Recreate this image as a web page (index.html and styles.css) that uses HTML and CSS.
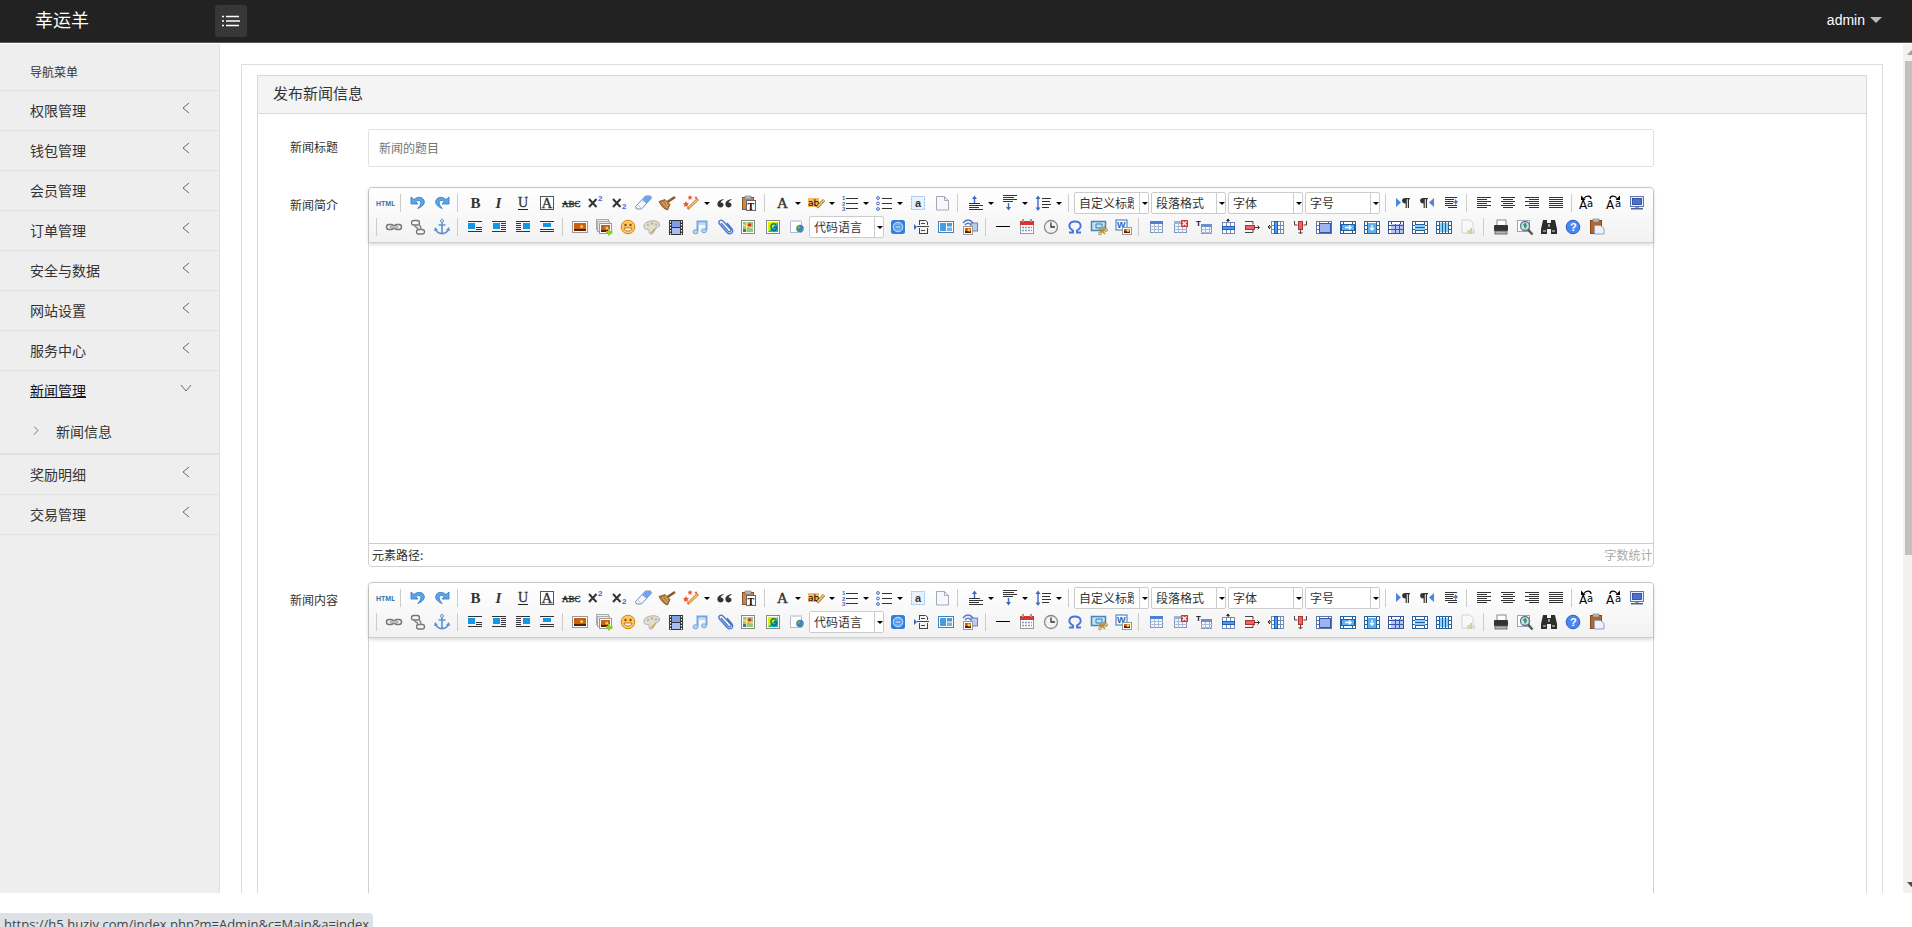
FILE: index.html
```html
<!DOCTYPE html>
<html lang="zh-CN">
<head>
<meta charset="utf-8">
<title>发布新闻信息</title>
<link rel="stylesheet" href="styles.css">
</head>
<body>
<header class="topbar">
  <a class="brand" href="#">幸运羊</a>
  <button class="menu-toggle" type="button" aria-label="菜单">
    <svg width="18" height="12" viewBox="0 0 18 12"><path d="M0 1.5h2M4 1.5h13M0 6h2M4 6h14M0 10.500h2M4 10.500h13" stroke="#fff" stroke-width="1.300"/></svg>
  </button>
  <button class="account" type="button">admin <span class="caret"></span></button>
</header>

<div class="shell">
  <nav class="sidebar">
    <h2 class="nav-title">导航菜单</h2>
    <ul class="nav-list">
      <li><a class="nav-link" href="#">权限管理<svg class="chevron" viewBox="0 0 12 12"><path d="M9 1 3 6l6 5"/></svg></a></li>
      <li><a class="nav-link" href="#">钱包管理<svg class="chevron" viewBox="0 0 12 12"><path d="M9 1 3 6l6 5"/></svg></a></li>
      <li><a class="nav-link" href="#">会员管理<svg class="chevron" viewBox="0 0 12 12"><path d="M9 1 3 6l6 5"/></svg></a></li>
      <li><a class="nav-link" href="#">订单管理<svg class="chevron" viewBox="0 0 12 12"><path d="M9 1 3 6l6 5"/></svg></a></li>
      <li><a class="nav-link" href="#">安全与数据<svg class="chevron" viewBox="0 0 12 12"><path d="M9 1 3 6l6 5"/></svg></a></li>
      <li><a class="nav-link" href="#">网站设置<svg class="chevron" viewBox="0 0 12 12"><path d="M9 1 3 6l6 5"/></svg></a></li>
      <li><a class="nav-link" href="#">服务中心<svg class="chevron" viewBox="0 0 12 12"><path d="M9 1 3 6l6 5"/></svg></a></li>
      <li class="open">
        <a class="nav-link current" href="#">新闻管理<svg class="chevron" viewBox="0 0 12 12"><path d="M1 3l5 6 5-6"/></svg></a>
        <ul class="sub-list">
          <li><a class="sub-link" href="#"><svg class="sub-chevron" viewBox="0 0 6 9"><path d="M1 .5l4 4-4 4"/></svg>新闻信息</a></li>
        </ul>
      </li>
      <li><a class="nav-link" href="#">奖励明细<svg class="chevron" viewBox="0 0 12 12"><path d="M9 1 3 6l6 5"/></svg></a></li>
      <li><a class="nav-link" href="#">交易管理<svg class="chevron" viewBox="0 0 12 12"><path d="M9 1 3 6l6 5"/></svg></a></li>
    </ul>
  </nav>

  <main class="content">
    <section class="frame">
      <form class="panel">
        <h1 class="panel-title">发布新闻信息</h1>
        <div class="panel-body">
          <div class="row row-input">
            <label class="row-label" for="title">新闻标题</label>
            <input class="text-input" id="title" type="text" placeholder="新闻的题目">
          </div>
          <div class="row row-editor">
            <label class="row-label" for="intro">新闻简介</label>
            <div class="editor">
              <div class="toolbar"></div>
              <textarea class="editor-area" id="intro"></textarea>
              <div class="editor-foot"><span>元素路径:</span><span class="count">字数统计</span></div>
            </div>
          </div>
          <div class="row row-editor">
            <label class="row-label" for="body">新闻内容</label>
            <div class="editor">
              <div class="toolbar"></div>
              <textarea class="editor-area" id="body"></textarea>
              <div class="editor-foot"><span>元素路径:</span><span class="count">字数统计</span></div>
            </div>
          </div>
        </div>
      </form>
    </section>
  </main>

  <div class="scroll-track" aria-hidden="true">
    <svg class="scroll-arrow" viewBox="0 0 17 17"><path d="M4 11l4.500-5 4.500 5z" fill="#a0a0a0"/></svg>
    <div class="scroll-thumb"></div>
    <svg class="scroll-arrow" viewBox="0 0 17 17"><path d="M4 6l4.500 5L13 6z" fill="#505050"/></svg>
  </div>
</div>

<footer class="status"><div class="status-text">https://h5.huziy.com/index.php?m=Admin&amp;c=Main&amp;a=index</div></footer>
<script src="toolbar.js"></script>
</body>
</html>
```

FILE: styles.css
```css
* { box-sizing: border-box; }

body {
  margin: 0;
  height: 100vh;
  display: flex;
  flex-direction: column;
  overflow: hidden;
  background: #fff;
  color: #333;
  font-family: "Noto Sans CJK SC", sans-serif;
  font-size: 12px;
}

a { color: inherit; text-decoration: none; }
button { font: inherit; border: 0; padding: 0; background: none; color: inherit; }
ul { list-style: none; margin: 0; padding: 0; }

.topbar {
  flex: none;
  height: 43px;
  display: flex;
  align-items: flex-start;
  background: #222;
  border-bottom: 1px solid #555;
  color: #fff;
}
.brand { width: 215px; padding-left: 35px; font-size: 18px; line-height: 38px; }
.menu-toggle {
  width: 32px;
  height: 32px;
  margin-top: 5px;
  display: grid;
  place-items: center;
  border-radius: 3px;
  background: #373737;
}
.account {
  margin-left: auto;
  padding-right: 30px;
  display: flex;
  align-items: center;
  gap: 5px;
  font-family: "Liberation Sans", Arial, sans-serif;
  font-size: 14px;
  line-height: 40px;
}
.caret { border: 6px solid transparent; border-top-color: #bbb; border-bottom: 0; }

.shell { flex: 1; min-height: 0; display: flex; margin-top: 1px; }

.sidebar { flex: none; width: 220px; background: #eee; border-right: 1px solid #e2e2e2; }
.nav-title {
  margin: 0;
  height: 47px;
  padding: 10px 30px 0;
  border-bottom: 1px solid #e2e2e2;
  font-size: 12px;
  font-weight: 400;
  line-height: 36px;
}
.nav-list > li { border-bottom: 1px solid #e2e2e2; }
.nav-link {
  height: 39px;
  padding: 0 27px 0 30px;
  display: flex;
  justify-content: space-between;
  font-size: 14px;
  line-height: 39px;
}
.current { color: #112; text-decoration: underline; }
.chevron { width: 12px; height: 12px; margin-top: 11px; fill: none; stroke: #666; }
.sub-list { border-bottom: 1px solid #e2e2e2; }
.sub-link {
  height: 43px;
  padding: 0 0 2px 33px;
  display: flex;
  align-items: center;
  gap: 17px;
  font-size: 14px;
}
.sub-chevron { width: 6px; height: 9px; fill: none; stroke: #777; }

.content { flex: 1; min-width: 0; overflow: hidden; padding: 20px 20px 0 21px; }
.frame { border: 1px solid #ddd; padding: 10px 15px; }
.panel { border: 1px solid #d9d9d9; }
.panel-title {
  margin: 0;
  height: 38px;
  padding-left: 15px;
  border-bottom: 1px solid #d9d9d9;
  background: #f4f4f4;
  font-size: 15px;
  font-weight: 400;
  line-height: 34px;
}
.panel-body { padding-top: 15px; }
.row { display: flex; }
.row-input { margin-bottom: 20px; }
.row-editor { margin-bottom: 15px; }
.row-label { flex: none; width: 110px; padding-left: 32px; line-height: 36px; }
.text-input {
  width: 80%;
  height: 38px;
  padding: 0 10px 2px;
  border: 1px solid #e2e2e2;
  border-radius: 2px;
  font: inherit;
}
.text-input::placeholder { color: #757575; opacity: 1; }

.editor { width: 80%; min-width: 0; border: 1px solid #d0d0d0; border-radius: 4px; }
.toolbar {
  position: relative;
  padding: 3px 4px;
  border-bottom: 1px solid #d0d0d0;
  border-radius: 4px 4px 0 0;
  background: linear-gradient(#fff, #f2f2f2);
  box-shadow: 0 1px 4px rgba(0, 0, 0, .2);
}
.tool-row { display: flex; flex-wrap: wrap; min-height: 24px; align-items: center; }
.tool { width: 24px; height: 24px; display: flex; align-items: center; padding-left: 2px; }
.tool svg { flex: none; width: 20px; height: 20px; }
.tool-menu { width: 34px; }
.tool-menu::after {
  content: "";
  margin-left: 3px;
  border: 3px solid transparent;
  border-top-color: #000;
  border-bottom: 0;
}
.off { opacity: .35; }
.sep { width: 1px; height: 18px; margin: 0 5px 0 3px; background: #ccc; }
.combo { position: relative; width: 75px; height: 22px; margin: 0 2px 0 0; }
.tool + .combo { margin: 0 2px 0 1px; }
.combo select {
  width: 100%;
  height: 22px;
  padding: 0 14px 1px 4px;
  border: 1px solid #ccc;
  border-radius: 2px;
  appearance: none;
  background: linear-gradient(#ccc, #ccc) right 8px top / 1px 100% no-repeat, #fff;
  color: #333;
  font: inherit;
}
.combo::after {
  content: "";
  position: absolute;
  right: 1px;
  top: 10px;
  border: 3px solid transparent;
  border-top-color: #000;
  border-bottom: 0;
}
.editor-area { display: block; width: 100%; height: 300px; border: 0; resize: none; background: #fff; }
.editor-foot {
  height: 23px;
  padding: 0 1px 0 3px;
  display: flex;
  justify-content: space-between;
  border-top: 1px solid #ccc;
  line-height: 22px;
}
.count { color: #aaa; }

.scroll-track {
  flex: none;
  width: 9px;
  overflow: hidden;
  display: flex;
  flex-direction: column;
  background: #f1f1f1;
}
.scroll-arrow { flex: none; width: 17px; height: 17px; }
.scroll-thumb { width: 13px; height: 58.2%; margin: 0 2px auto; background: #c1c1c1; }

.status { flex: none; height: 34px; padding-top: 20px; overflow: hidden; }
.status-text {
  width: max-content;
  padding: 0 4px;
  border-radius: 0 4px 0 0;
  background: #dee1e6;
  color: #444;
  font-family: "Open Sans", sans-serif;
  font-size: 13px;
  line-height: 22px;
}
```

FILE: toolbar.js
```js
const rect = (x, y, w, h, fill, more = '') =>
  `<rect x="${x}" y="${y}" width="${w}" height="${h}" fill="${fill}" ${more}/>`;
const line = (d, stroke = '#333', w = 1, more = '') =>
  `<path d="${d}" fill="none" stroke="${stroke}" stroke-width="${w}" ${more}/>`;
const fill = (d, color, more = '') => `<path d="${d}" fill="${color}" ${more}/>`;
const text = (x, y, size, value, more = '') =>
  `<text x="${x}" y="${y}" font-size="${size}" ${more}>${value}</text>`;
const serif = 'font-family="Liberation Serif" fill="#333"';
const sans = 'font-family="Liberation Sans" font-weight="bold"';
const bars = list => list.map(([x, y, w]) => rect(x, y, w, 1, '#333')).join('');

const photo = (x, y, w, h) =>
  rect(x + .5, y + .5, w - 1, h - 1, '#fff', 'stroke="#999"') +
  rect(x + 2, y + 2, w - 4, h - 4, '#c9600f') +
  rect(x + 2, y + h - 4, w - 4, 2, '#5a2006') +
  `<circle cx="${x + w * .6}" cy="${y + h * .45}" r="1.5" fill="#ffc64a"/>`;

const grid = (x, y, w, h, head = '#4a80d8', body = '#f4f8fe') =>
  rect(x + .5, y + .5, w - 1, h - 1, body, 'stroke="#7c93bd"') +
  line(`M${x} ${y + 5.5}h${w}M${x} ${y + 8.5}h${w}M${x + 4.5} ${y + 3}v${h - 3}M${x + 8.5} ${y + 3}v${h - 3}`, '#a9b9d6') +
  rect(x, y, w, 3, head);

const cells = (inner, edge = '#2b5f9e') =>
  rect(2.5, 4.5, 15, 12, '#fff', `stroke="${edge}"`) +
  line('M2 8.500h3M2 12.500h3M15 8.500h3M15 12.500h3M5.500 4v13M14.500 4v13', edge) + inner;

const undo = '<path d="M3 4v7h7L7.800 8.800c2-2 5-1.500 5 .8 0 2-1 3.500-3 5.900 4-1.500 6.500-3.800 6.500-6.500 0-4.500-6-6.500-10.300-2.400z" fill="#5aa5e6" stroke="#2f78c4" stroke-width=".8"/>';
const upArrow = (x, y) => line(`M${x} ${y + 2}v5`, '#3f68c0', 1.4) + fill(`M${x - 2.5} ${y + 3}l2.500-3.500 2.500 3.500z`, '#3f68c0');
const downArrow = (x, y) => line(`M${x} ${y}v5`, '#3f68c0', 1.4) + fill(`M${x - 2.5} ${y + 4}l2.500 3.500 2.500-3.500z`, '#3f68c0');
const pilcrow = x => fill(`M${x + 8} 5v1.200h-1V15H${x + 5.8}V6.200H${x + 4.8}V15H${x + 3.6}v-4.500C${x - 1} 10.500 ${x - 1} 5 ${x + 3} 5z`, '#333');
const smallA = 'font-family="DejaVu Sans" fill="#000"';

const icons = {
  html: ['HTML', text(1, 12.5, 7, 'HTML', `${sans} fill="#36729f"`)],
  undo: ['撤销', undo],
  redo: ['重做', `<g transform="matrix(-1 0 0 1 20 0)">${undo}</g>`],
  bold: ['加粗', text(5.500, 15, 15, 'B', `${serif} font-weight="bold"`)],
  italic: ['斜体', text(6.500, 15, 15, 'I', `${serif} font-weight="bold" font-style="italic"`)],
  underline: ['下划线', text(5, 14, 14, 'U', `${serif} stroke="#333" stroke-width=".3"`) + rect(5, 16, 10, 1, '#222')],
  border: ['字符边框', rect(3.5, 3.5, 13, 13, '#fff', 'stroke="#555"') + text(4.500, 15, 15, 'A', `${serif} stroke="#333" stroke-width=".3"`)],
  strike: ['删除线', text(1, 14, 9, 'ABC', `${serif} stroke="#333" stroke-width=".4"`) + rect(1, 10, 17, 1, '#333')],
  sup: ['上标', line('M4 6l7.500 8M11.500 6L4 14', '#333', 2) + text(13, 8, 8, '2', `${sans} fill="#3c69d6"`)],
  sub: ['下标', line('M4 6l7.500 8M11.500 6L4 14', '#333', 2) + text(13, 16, 8, '2', `${sans} fill="#3c69d6"`)],
  eraser: ['清除格式', fill('M2.500 13.500L12.500 3h5l1 2-10 11H3.500z', '#f5f7fb', 'stroke="#7c8aa8"') + fill('M9 7L12.500 3h5l1 2-5 5.500z', '#6ea3ee') + line('M4.500 12l4 3.500', '#b8c2d4')],
  broom: ['格式刷', fill('M2 8.500l6-2 5 5-2.500 5.500C7 16 4 13 2 8.500z', '#b37a3a', 'stroke="#7c4c1b" stroke-width=".8"') + line('M5 9l5 6M8 8l3 5', '#e3b877') + line('M10.500 9L18 4', '#8a5a2b', 2.6)],
  magic: ['自动排版', line('M6.500 16L17 6', '#d98a3e', 3) + line('M8 14.500L16 7', '#ffe0a0', 1) + fill('M5 8l1 2 2 .3-1.500 1.500.3 2L5 13l-2 .8.4-2L2 10.300 4 10zM9 2l.7 1.600 1.800.2-1.300 1.200.3 1.800L9 6l-1.500.8.300-1.800L6.500 3.800l1.800-.2zM15 3l.5 1 1 .2-.8.800.2 1-.9-.5-.9.5.2-1-.8-.8 1-.2z', '#e8552b')],
  quote: ['引用', fill('M8.500 6C4 7 2 9 2.500 12c.5 3.500 6 3 6 0 0-1.800-1.500-2.700-3-2.300C5.800 8.200 7 7.300 8.500 7zM16.500 6c-4.500 1-6.500 3-6 6 .5 3.500 6 3 6 0 0-1.800-1.500-2.700-3-2.300.3-1.500 1.500-2.400 3-2.700z', '#333')],
  pasteplain: ['纯文本粘贴', rect(3.5, 4.5, 11, 12, '#c98748', 'stroke="#8a5226"') + rect(6, 3, 6, 3, '#bbb', 'stroke="#777" stroke-width=".6"') + rect(7.5, 7.5, 9, 10, '#fff', 'stroke="#666"') + text(8.500, 16.500, 10, 'T', 'font-family="Liberation Serif" font-weight="bold"')],
  forecolor: ['字体颜色', text(5, 14.500, 15, 'A', `${serif} stroke="#333" stroke-width=".4"`)],
  backcolor: ['背景色', rect(2, 5, 11, 9, '#f7b95c') + text(2, 12.500, 9, 'ab', 'font-family="DejaVu Sans" fill="#000"') + line('M11 14.500L18 7', '#8f6320', 3) + line('M11.500 14L18 7', '#ffd978', 1.3)],
  ol: ['有序列表', ['1', '2', '3'].map((n, i) => text(2, 7 + i * 5.5, 6, n, `${sans} fill="#3f68c0"`)).join('') + bars([[6, 5, 12], [6, 10, 12], [6, 15, 12]])],
  ul: ['无序列表', [5, 10.5, 16].map(y => `<circle cx="4" cy="${y}" r="1.400" fill="none" stroke="#3f68c0"/>`).join('') + bars([[8, 5, 10], [8, 10, 10], [8, 15, 10]])],
  selectall: ['全选', rect(3.500, 3.500, 13, 13, '#eaf3fd', 'stroke="#8fbdee" stroke-dasharray="2 1"') + text(7, 14, 11, 'a', `${sans} fill="#333"`)],
  cleardoc: ['清空文档', fill('M4.500 3.500h8l4 4v9.500h-12z', '#f6f7fa', 'stroke="#a3a9b8"') + line('M12.500 3.500v4h4', '#a3a9b8')],
  rowtop: ['段前距', upArrow(9.500, 3) + bars([[4, 10, 11], [4, 12, 14], [4, 14, 10], [4, 16, 14]])],
  rowbottom: ['段后距', bars([[4, 2, 14], [4, 4, 11], [4, 6, 14], [4, 8, 10]]) + downArrow(9.500, 10)],
  lineheight: ['行间距', line('M5 5v11', '#3f68c0', 1.4) + fill('M2.500 6L5 2.500 7.500 6zM2.500 14.500L5 18l2.500-3.500z', '#3f68c0') + bars([[9, 5, 9], [9, 8, 8], [9, 11, 9], [9, 14, 7]])],
  ltr: ['从左向右输入', fill('M3 5l5 4.500L3 14z', '#4a84e8') + pilcrow(9)],
  rtl: ['从右向左输入', pilcrow(3) + fill('M17 5l-5 4.500 5 4.500z', '#4a84e8')],
  indent: ['首行缩进', bars([[4, 4, 12], [4, 6, 9], [4, 8, 8], [4, 10, 8], [4, 12, 12], [7, 14, 9]]) + line('M12 9h3', '#3f78d8', 1.5) + fill('M14 6l3 3-3 3z', '#3f78d8')],
  left: ['居左对齐', bars([[3, 4, 14], [3, 6, 10], [3, 8, 14], [3, 10, 10], [3, 12, 14], [3, 14, 10]])],
  center: ['居中对齐', bars([[3, 4, 14], [5, 6, 10], [3, 8, 14], [5, 10, 10], [3, 12, 14], [5, 14, 10]])],
  right: ['居右对齐', bars([[3, 4, 14], [7, 6, 10], [3, 8, 14], [7, 10, 10], [3, 12, 14], [7, 14, 10]])],
  justify: ['两端对齐', bars([[3, 4, 14], [3, 6, 14], [3, 8, 14], [3, 10, 14], [3, 12, 14], [3, 14, 14]])],
  upper: ['字母大写', text(0, 16, 12, 'A', smallA) + text(8, 14, 10, 'a', smallA) + line('M12 6c0-3.500-5-4-7-.5', '#000', 1.2) + fill('M2 2.500v4.500h4.500z', '#000')],
  lower: ['字母小写', text(3, 16, 12, 'A', smallA) + text(12, 14, 10, 'a', smallA) + line('M7 6c0-3.500 5-4 7-.5', '#000', 1.2) + fill('M17 2.500v4.500h-4.500z', '#000')],
  full: ['全屏', rect(3.5, 3.5, 13, 10, '#e8eefb', 'stroke="#5d78b0"') + rect(5.500, 5.500, 9, 6, '#4a70d4', 'stroke="#26408a" stroke-width=".8"') + rect(8, 14, 4, 1, '#8899bb') + rect(4, 15, 12, 1.5, '#4b6192')],

  link: ['超链接', rect(2.5, 7.5, 7, 5, 'none', 'rx="2.500" stroke="#777" stroke-width="1.500"') + rect(10.5, 7.5, 7, 5, 'none', 'rx="2.500" stroke="#777" stroke-width="1.500"') + rect(6, 9, 8, 2, '#ddd', 'rx="1" stroke="#888" stroke-width=".8"')],
  unlink: ['取消链接', rect(3.5, 3.5, 8, 4.5, '#f7f7f7', 'rx="2.200" stroke="#777" stroke-width="1.300"') + rect(8.5, 12.5, 8, 4.5, '#f7f7f7', 'rx="2.200" stroke="#777" stroke-width="1.300"') + line('M6 7c0 4 3 2 4 5M10 7c2 1 3 3 3 6', '#888', 1.5)],
  anchor: ['锚点', '<circle cx="10" cy="4" r="1.500" fill="none" stroke="#5b93cf"/>' + line('M10 5.500V17M6.500 8h7', '#5b93cf', 1.6) + line('M3.500 12c1 3 3 4.500 6.500 4.500s5.500-1.500 6.500-4.500', '#5b93cf', 1.8) + fill('M2 14l1-4 3 3zM18 14l-1-4-3 3z', '#5b93cf')],
  imgnone: ['默认', bars([[3, 4, 14], [11, 10, 6], [11, 12, 6], [3, 14, 14]]) + rect(3, 6, 7, 6, '#1496e4')],
  imgleft: ['左浮动', bars([[3, 4, 14], [12, 6, 5], [12, 8, 5], [12, 10, 5], [12, 12, 5], [3, 14, 14]]) + rect(4, 6, 7, 6, '#1496e4')],
  imgright: ['右浮动', bars([[3, 4, 14], [3, 6, 5], [3, 8, 5], [3, 10, 5], [3, 12, 5], [3, 14, 14]]) + rect(10, 6, 7, 6, '#1496e4')],
  imgcenter: ['居中', bars([[3, 4, 14], [3, 12, 14], [3, 14, 14]]) + rect(6, 6, 8, 4, '#1496e4')],
  image: ['单图上传', photo(2, 4, 16, 12)],
  images: ['多图上传', rect(2.5, 2.5, 12, 10, '#eee', 'stroke="#aaa"') + rect(3.5, 4.5, 12, 10, '#eee', 'stroke="#aaa"') + photo(5, 6, 13, 11) + fill('M14 12h2v2h2.500v2.200H16v2.300h-2v-2.300h-2V14h2z', '#8ed11f')],
  emotion: ['表情', '<circle cx="10" cy="10" r="6.800" fill="#ffc95a" stroke="#d98318"/><circle cx="7.500" cy="8" r="1.200" fill="#8a4a10"/><circle cx="12.500" cy="8" r="1.200" fill="#8a4a10"/>' + fill('M6 11h8c-.5 4-7.500 4-8 0z', '#fff', 'stroke="#a65b12" stroke-width=".8"')],
  scrawl: ['涂鸦', fill('M9 4c5-1 9 1 8.500 4s-3.500 2-4.500 4-1 5-4 5-1.500-3-2-4-4.500.5-5-3 3-5.500 7-6z', '#e0ded4', 'stroke="#b0aea5"') + '<circle cx="6" cy="8" r="1.300" fill="#a9c98e"/><circle cx="10" cy="6.500" r="1.300" fill="#e0a86e"/><circle cx="14" cy="7.500" r="1.300" fill="#9dbbdd"/>' + line('M9 16l5-5', '#c9a44c', 1.3)],
  video: ['视频', rect(3, 3, 14, 15, '#333') + rect(6, 4, 8, 6, '#7d9de8') + rect(6, 11, 8, 6, '#a7bdf2') + line('M4.500 4v14M15.500 4v14', '#fff', 1.2, 'stroke-dasharray="1.500 1.500"')],
  music: ['音乐', line('M7.500 14V4.500h9V13', '#6da7dd', 2) + line('M7.500 7h9', '#9cc6ec', 1.2) + '<ellipse cx="5.500" cy="14.800" rx="2.500" ry="2" fill="#b4d5f3" stroke="#6da7dd"/><ellipse cx="14" cy="13.800" rx="2.500" ry="2" fill="#b4d5f3" stroke="#6da7dd"/>'],
  attach: ['附件', line('M7 6l7 8c2 2 4 0 2.500-2L9 4C6.500 2 3.500 4.500 5.500 7l7.500 8.500c3 3 7.500 0 5-3.500L13 6', '#4477cc', 1.3)],
  map: ['地图', rect(3.5, 3.5, 13, 13, '#fff', 'stroke="#888"') + rect(5, 5, 10, 10, '#8ecb7a') + line('M5 8l10 3M9 5l-1 10', '#f7e27b', 1.5) + '<circle cx="11.500" cy="8" r="1.800" fill="#d8362a"/>' + rect(5, 12, 3, 3, '#3b74c8')],
  gmap: ['Google地图', rect(4.5, 3.5, 13, 13, '#fff', 'stroke="#888"') + rect(6, 5, 10, 10, '#00b8d8') + fill('M6 5h10L6 15z', '#dff000') + line('M14 7.500c-3-2-5.500 0-5 3s4 4 5.500 1.500v-2H12', '#166a68', 1.5)],
  frame: ['插入Iframe', rect(4.5, 3.5, 11, 12, '#fff', 'stroke="#b3b9c6"') + rect(4, 3, 12, 2, '#d3d9e8') + '<circle cx="14" cy="11.500" r="3.800" fill="#3c83c4"/>' + fill('M12.500 8.500c2 0 2 2 1 3s-2 1-2 0 0-2 1-3zM15.500 11c1.500 0 2 1 .5 3z', '#6fb23c')],
  webapp: ['百度应用', rect(3, 3, 14, 14, '#2f7fe0', 'rx="2.500"') + '<circle cx="10" cy="10" r="4.800" fill="#6fb0f5" stroke="#c8e0fb"/>' + rect(7, 9, 6, 2, '#d8ecff', 'stroke="#225fb5" stroke-width=".6"')],
  pagebreak: ['分页', fill('M2 7l3 3-3 3z', '#3a62c4') + line('M5 9.500h12M7.500 8V3M15.500 8V5l-2-1.500h-6M9 6.500h4M7.500 11v6M15.500 11v6M7.500 16.500h8M9 13.500h4', '#444')],
  template: ['模板', rect(2.5, 4.5, 15, 11, '#fff', 'stroke="#4480b8"') + rect(4, 6, 6, 8, '#4a9bdc') + rect(11, 6, 5, 3.5, '#4a9bdc') + rect(11, 10.5, 5, 3.5, '#6fb3e6')],
  background: ['背景', rect(11, 6, 6.5, 8, '#b9cdf0', 'stroke="#6b83b5"') + line('M3 6c3-4 7-4 10 0M5 8c2-2.500 4-2.500 6 0', '#5176c4', 1.3) + photo(3, 9, 10, 9)],
  hr: ['分隔线', rect(3, 9, 14, 1, '#000')],
  date: ['日期', rect(3.5, 4.5, 13, 12, '#fff', 'stroke="#999"') + rect(3, 4, 14, 4, '#d9352f') + rect(5, 2, 2, 3, '#999') + rect(13, 2, 2, 3, '#999') + line('M5 10.500h10M5 13.500h10', '#7f96c6', 1.5, 'stroke-dasharray="2 1"')],
  time: ['时间', '<circle cx="10" cy="10" r="6.500" fill="#f2f2f2" stroke="#888" stroke-width="1.300"/>' + line('M10 5.500V10h4', '#333', 1.3)],
  spechars: ['特殊字符', line('M4 15.500h4v-2C2 10 4 4.500 10 4.500S18 10 12 13.500v2h4', '#4674dc', 1.9)],
  snap: ['截图', rect(2.5, 4.500, 14, 9, '#bfe4f7', 'stroke="#4a84b4" stroke-width="1.500"') + line('M7 7h6v4H7z', '#3f7fae') + line('M10.500 17L16 9.500M10 11l6 6', '#b58e3c', 1.6) + '<circle cx="11" cy="16.500" r="1.400" fill="#f8e6a8" stroke="#b58e3c"/><circle cx="17" cy="13" r="1.400" fill="#f8e6a8" stroke="#b58e3c"/>'],
  word: ['图片转存', rect(3, 3, 11, 10, '#fff', 'stroke="#2f72bd"') + text(4, 11, 9, 'W', `${sans} fill="#1c5fb8"`) + photo(9, 10, 10, 8)],
  table: ['插入表格', grid(4, 4, 13, 12)],
  deltable: ['删除表格', grid(4, 4, 13, 12, '#9fb2d6') + rect(11, 3, 7, 7, '#d8352f') + line('M12.500 4.500l4 4M16.500 4.500l-4 4', '#fff', 1.3)],
  tabletitle: ['表格前插入行', text(2, 9, 8, 'T', `${sans} fill="#111"`) + grid(7, 7, 11, 10, '#6b8ed0')],
  insrow: ['前插入行', line('M10 2v3', '#222') + fill('M8 4l2-2.500L12 4z', '#222') + rect(4.5, 5.5, 12, 11, '#fff', 'stroke="#7288b5"') + line('M8.500 5v12M12.500 5v12', '#7288b5') + rect(4.500, 9.500, 12, 3, '#4a9df0', 'stroke="#1f5cb8"')],
  delrow: ['删除行', line('M3 4.500h8v3M3 15.500h8v-3', '#444') + rect(3.500, 8.500, 9, 4, '#e8666a', 'stroke="#b4302b"') + line('M13 10.500h4M15.500 8.500l2 2-2 2', '#333')],
  inscol: ['前插入列', line('M2 10h4M4 8l-2 2 2 2', '#222') + rect(5.500, 4.5, 12, 12, '#fff', 'stroke="#7288b5"') + line('M5 8.500h12M5 12.500h12M14.500 4v13', '#7288b5') + rect(8.5, 4.5, 3, 12, '#4a9df0', 'stroke="#1f5cb8"')],
  delcol: ['删除列', line('M4.500 4v4h3M16.500 4v4h-3M10.500 13v4M8.500 15l2 2 2-2', '#444') + rect(8.500, 4.500, 4, 8, '#e8666a', 'stroke="#b4302b"')],
  mergecells: ['合并多个单元格', cells(rect(5.500, 6.500, 11, 9, '#9db5ee', 'stroke="#3457a8"'), '#5c74ac')],
  mergeright: ['右合并单元格', cells(rect(3.500, 7.500, 13, 6, '#5fb0ee', 'stroke="#1b5fa5"') + line('M7 10.500h6M11 8.500l2 2-2 2', '#fff', 1.3))],
  mergedown: ['下合并单元格', cells(rect(6, 6, 8, 10, '#5fb0ee') + line('M10 8v5M8 11l2 2 2-2', '#fff', 1.3))],
  splitcells: ['完全拆分单元格', cells(rect(5, 7, 12, 9, '#b5c5f4') + line('M5 8.500h12M5 12.500h12M9.500 7v9M13.500 7v9', '#3457a8'), '#34549c')],
  splitrows: ['拆分成行', cells(rect(5, 7, 10, 7, '#8fd0f5') + line('M5 7.500h10M5 10.500h10M5 13.500h10', '#1b5fa5'))],
  splitcols: ['拆分成列', cells(rect(6, 6, 8, 9, '#8fd0f5') + line('M8.500 5v11M11.500 5v11', '#1b5fa5'))],
  charts: ['图表', fill('M4 3h8l3 3v10H4z', '#fff', 'stroke="#999"') + rect(9, 13, 3, 4, '#e0892a') + rect(12, 11, 2, 6, '#4fa839') + rect(15, 13, 2, 4, '#d9a63b'), 'off'],
  print: ['打印', rect(6, 3, 9, 6, '#fff', 'stroke="#888"') + rect(3, 8, 14, 6, '#333', 'rx="1"') + rect(4, 14, 12, 3, '#b5b5b5', 'stroke="#555" stroke-width=".8"')],
  preview: ['预览', rect(2.5, 3.5, 12, 11, '#fff', 'stroke="#9ba3b3"') + '<circle cx="10" cy="9" r="4.500" fill="#bfe3f4" stroke="#6b7683" stroke-width="1.300"/>' + fill('M8 7l3-1 1 3-2 3z', '#3f9a50') + line('M13 12.500l4.500 5', '#555', 2.4)],
  search: ['查询替换', fill('M4 3h4v3h4V3h4l2 9v5h-6v-5H8v5H2v-5z', '#2d2d2d') + rect(4, 13, 3, 2, '#888') + rect(13, 13, 3, 2, '#888') + rect(9, 7, 2, 3, '#999')],
  help: ['帮助', '<circle cx="10" cy="10" r="6.800" fill="#4a86f0" stroke="#2c5fc4"/>' + text(7, 14, 11, '?', `${sans} fill="#fff"`)],
  drafts: ['从草稿箱加载', rect(3.5, 3.5, 11, 13, '#b5652a', 'stroke="#8a4717"') + rect(6, 2, 6, 3, '#bbb', 'stroke="#777" stroke-width=".6"') + fill('M7.500 8.500h6l3.500 3v5.500H7.500z', '#eef2fa', 'stroke="#93a0b8"')]
};

const rows = [
  'html | undo redo | bold italic underline border strike sup sub eraser broom magic+ quote pasteplain | forecolor+ backcolor+ ol+ ul+ selectall cleardoc | rowtop+ rowbottom+ lineheight+ | =自定义标题 =段落格式 =字体 =字号 | ltr rtl indent | left center right justify | upper lower full',
  '| link unlink anchor | imgnone imgleft imgright imgcenter | image images emotion scrawl video music attach map gmap frame =代码语言 webapp pagebreak template background | hr date time spechars snap word | table deltable tabletitle insrow delrow inscol delcol mergecells mergeright mergedown splitcells splitrows splitcols charts | print preview search help drafts'
];

function item(token) {
  if (token === '|') return '<span class="sep"></span>';
  if (token[0] === '=') {
    const name = token.slice(1);
    return `<label class="combo"><select aria-label="${name}"><option>${name}</option></select></label>`;
  }
  const menu = token.endsWith('+');
  const [title, art, state = ''] = icons[menu ? token.slice(0, -1) : token];
  return `<button type="button" class="tool ${menu ? 'tool-menu' : ''} ${state}" title="${title}" aria-label="${title}"><svg viewBox="0 0 20 20">${art}</svg></button>`;
}

document.querySelectorAll('.toolbar').forEach(bar => {
  bar.innerHTML = rows.map(row => `<div class="tool-row">${row.split(' ').map(item).join('')}</div>`).join('');
});
```
